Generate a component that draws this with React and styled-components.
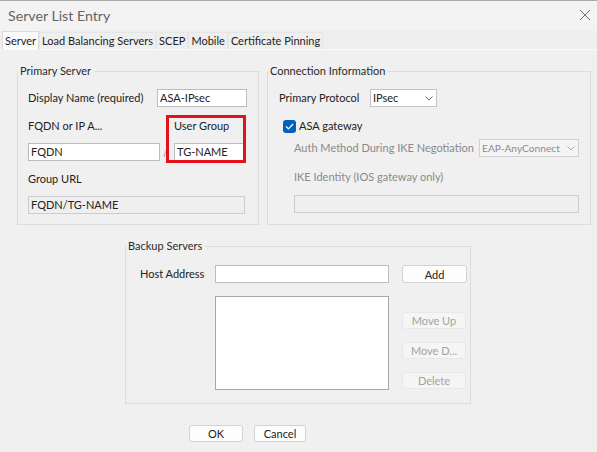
import React from "react";
import styled, { createGlobalStyle } from "styled-components";

const Global = createGlobalStyle`
  html, body { margin: 0; padding: 0; }
  body {
    width: 597px; height: 452px; overflow: hidden;
    background: #f0f0f0;
    font-family: Lato, "Noto Sans", sans-serif;
    font-size: 11px; color: #222222;
  }
  * { box-sizing: border-box; }
`;

const Window = styled.div`
  width: 597px; height: 452px;
  display: flex; flex-direction: column;
  background: #f0f0f0;
`;

const TitleBar = styled.div`
  height: 31px; flex: none;
  border-top: 1px solid #a9a9a9;
  background: #f3f3f3;
  display: flex; align-items: center; justify-content: space-between;
  padding: 0 6px 2px 8px;
  color: #646464;
  font-size: 14.2px;
`;

const CloseIcon = () => (
  <svg width="12" height="12" viewBox="0 0 12 12">
    <path d="M1 1 L11 11 M11 1 L1 11" stroke="#707070" strokeWidth="1" fill="none" />
  </svg>
);

const TabStrip = styled.div`
  height: 19px; flex: none;
  display: flex; align-items: flex-end;
  padding-left: 2px;
  background: #eeeeee;
  border-bottom: 1px solid #fafafa;
`;

const Tab = styled.div`
  height: ${p => (p.$active ? "19px" : "17px")};
  margin-bottom: ${p => (p.$active ? "-1px" : "0")};
  padding: 0 2px;
  display: flex; align-items: center;
  line-height: 16px;
  background: ${p => (p.$active ? "#fbfbfb" : "#efefef")};
  border: 1px solid ${p => (p.$active ? "#dadada" : "#e6e6e6")};
  border-bottom: none;
  white-space: nowrap;
`;

const Panel = styled.div`
  flex: 1;
  display: flex; flex-direction: column;
  padding: 13px 7px 0 17px;
`;

const TopRow = styled.div`
  display: flex; gap: 8px;
`;

const Group = styled.fieldset`
  margin: 0; padding: 0; min-width: 0;
  border: 1px solid #dcdcdc;
  width: ${p => p.$w}px;
  flex: none;
  display: block;
`;

const Legend = styled.legend`
  padding: 0 3px 0 2px;
  margin-left: 0;
  line-height: 16px;
  height: 16px;
  color: #2a2a2a;
`;

const Body = styled.div`
  display: flex; flex-direction: column;
  padding: ${p => p.$pad};
`;

const Row = styled.div`
  display: flex; align-items: center;
  justify-content: ${p => p.$justify || "flex-start"};
  margin-top: ${p => p.$mt || 0}px;
  padding-left: ${p => p.$indent || 0}px;
`;

const Label = styled.span`
  line-height: 16px;
  white-space: nowrap;
  margin-top: ${p => p.$mt || 0}px;
  color: ${p => (p.$disabled ? "#8a8a8a" : "#222222")};
`;

const Input = styled.div`
  width: ${p => p.$w}px; height: 18px; flex: none;
  margin-top: ${p => p.$mt || 0}px;
  border: 1px solid ${p => (p.$disabled ? "#cdcdcd" : "#bdbdbd")};
  background: ${p => (p.$disabled ? "#efefef" : "#ffffff")};
  padding: 0 2px;
  line-height: 16px;
  white-space: nowrap; overflow: hidden;
  color: #222222;
`;

const Select = styled.div`
  width: ${p => p.$w}px; height: 18px; flex: none;
  border: 1px solid ${p => (p.$disabled ? "#d0d0d0" : "#c4c4c4")};
  background: ${p => (p.$disabled ? "#f4f4f4" : "#ffffff")};
  color: ${p => (p.$disabled ? "#8c8c8c" : "#222222")};
  display: flex; align-items: center; gap: 2px;
  padding: 0 3px 0 2px;
  line-height: 16px; white-space: nowrap;
  font-size: ${p => p.$fs || 11}px;
`;

const SelectText = styled.span`
  flex: 1; min-width: 0;
`;

const Chevron = ({ color = "#6a6a6a" }) => (
  <svg width="8" height="5" viewBox="0 0 8 5" style={{ flex: "none" }}>
    <path d="M0.5 0.5 L4 4 L7.5 0.5" stroke={color} strokeWidth="1" fill="none" />
  </svg>
);

const PrimaryGrid = styled.div`
  display: grid;
  grid-template-columns: 132px 14px 71px;
  position: relative;
`;

const Slash = styled.span`
  line-height: 16px;
  color: #8a8a8a;
  padding-left: 3px;
  align-self: end;
`;

const Highlight = styled.div`
  position: absolute;
  left: 138px; top: 8px;
  width: 80px; height: 48px;
  border: 3px solid #e3121c;
  pointer-events: none;
`;

const Check = styled.span`
  width: 13px; height: 13px; flex: none;
  border-radius: 3px;
  background: #0062be;
  display: inline-flex; align-items: center; justify-content: center;
  margin: 0 3px 0 4px;
`;

const BackupGroup = styled(Group)`
  margin: 13px 0 0 108px;
`;

const BackupGrid = styled.div`
  display: grid;
  grid-template-columns: 62px 174px 65px;
  column-gap: 13px;
  row-gap: 13px;
  align-items: start;
`;

const ListBox = styled.div`
  grid-column: 2;
  height: 94px;
  border: 1px solid #a8a8a8;
  background: #ffffff;
`;

const SideButtons = styled.div`
  grid-column: 3;
  align-self: stretch;
  display: flex; flex-direction: column; justify-content: flex-end;
  gap: 13px; padding-bottom: 1px;
`;

const Button = styled.div`
  width: ${p => p.$w || 64}px; height: ${p => p.$h || 17}px;
  border: 1px solid ${p => (p.$disabled ? "#e8e8e8" : "#d2d2d2")};
  border-radius: 3px;
  background: ${p => (p.$disabled ? "#f5f5f5" : "#fdfdfd")};
  color: ${p => (p.$disabled ? "#a3a3a3" : "#222222")};
  display: flex; align-items: center; justify-content: center;
  line-height: 15px; white-space: nowrap;
`;

const Footer = styled.div`
  display: flex; gap: 11px;
  margin: 21px 0 0 172px;
`;

export default function App() {
  return (
    <Window>
      <Global />
      <TitleBar>
        <span>Server List Entry</span>
        <CloseIcon />
      </TitleBar>
      <TabStrip>
        <Tab $active>Server</Tab>
        <Tab>Load Balancing Servers</Tab>
        <Tab>SCEP</Tab>
        <Tab>Mobile</Tab>
        <Tab>Certificate Pinning</Tab>
      </TabStrip>
      <Panel>
        <TopRow>
          <Group $w={242}>
            <Legend>Primary Server</Legend>
            <Body $pad="0 11px 10px 10px">
              <Row $mt={10} $justify="space-between">
                <Label>Display Name (required)</Label>
                <Input $w={90}>ASA-IPsec</Input>
              </Row>
              <PrimaryGrid>
                <Label $mt={11}>FQDN or IP A...</Label>
                <span />
                <Label $mt={11}>User Group</Label>
                <Input $w={132} $mt={9}>FQDN</Input>
                <Slash>/</Slash>
                <Input $w={71} $mt={9}>TG-NAME</Input>
                <Highlight />
              </PrimaryGrid>
              <Row $mt={10}>
                <Label>Group URL</Label>
              </Row>
              <Row $mt={9}>
                <Input $w={217} $disabled>FQDN/TG-NAME</Input>
              </Row>
            </Body>
          </Group>
          <Group $w={324}>
            <Legend>Connection Information</Legend>
            <Body $pad="0 11px 11px 11px">
              <Row $mt={10}>
                <Label style={{ width: 91 }}>Primary Protocol</Label>
                <Select $w={67}>
                  <SelectText>IPsec</SelectText>
                  <Chevron />
                </Select>
              </Row>
              <Row $mt={11}>
                <Check>
                  <svg width="9" height="7" viewBox="0 0 9 7">
                    <path d="M1 3.5 L3.5 6 L8 1" stroke="#ffffff" strokeWidth="1.2" fill="none" />
                  </svg>
                </Check>
                <Label>ASA gateway</Label>
              </Row>
              <Row $mt={5} $indent={15} $justify="space-between">
                <Label $disabled>Auth Method During IKE Negotiation</Label>
                <Select $w={100} $fs={10.2} $disabled>
                  <SelectText>EAP-AnyConnect</SelectText>
                  <Chevron color="#a8a8a8" />
                </Select>
              </Row>
              <Row $mt={12} $indent={15}>
                <Label $disabled>IKE Identity (IOS gateway only)</Label>
              </Row>
              <Row $mt={10} $indent={15}>
                <Input $w={285} $disabled />
              </Row>
            </Body>
          </Group>
        </TopRow>
        <BackupGroup $w={346}>
          <Legend>Backup Servers</Legend>
          <Body $pad="11px 0 13px 14px">
            <BackupGrid>
              <Label $mt={1}>Host Address</Label>
              <Input $w={174} />
              <Button $w={65} $h={18}>Add</Button>
              <ListBox />
              <SideButtons>
                <Button $disabled>Move Up</Button>
                <Button $disabled>Move D...</Button>
                <Button $disabled>Delete</Button>
              </SideButtons>
            </BackupGrid>
          </Body>
        </BackupGroup>
        <Footer>
          <Button $w={54}>OK</Button>
          <Button $w={52}>Cancel</Button>
        </Footer>
      </Panel>
    </Window>
  );
}
